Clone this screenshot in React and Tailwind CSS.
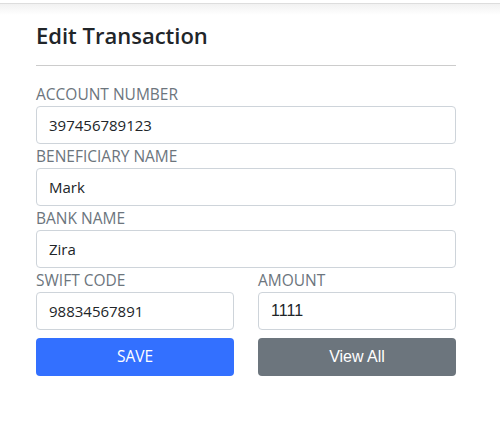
import React from 'react';

// Edit transaction form
const fields = [
    { label: 'ACCOUNT NUMBER', value: '397456789123' },
    { label: 'BENEFICIARY NAME', value: 'Mark' },
    { label: 'BANK NAME', value: 'Zira' },
];

const Field = ({ label, value, arial }) => (
    <div className="flex flex-col">
        <label className="text-[15.5px] leading-[24px] text-[#6c757d]">{label}</label>
        <input
            readOnly
            value={value}
            className={`h-[38px] w-full rounded-[4px] border border-[#ced4da] bg-white px-[12px] text-[#212529] outline-none ${arial ? "font-['Liberation_Sans',sans-serif] text-[16px]" : 'text-[15px]'}`}
        />
    </div>
);

export default function App() {
    return (
        <div className="min-h-[435px] w-full bg-white font-['Open_Sans',sans-serif]">
            {/* top shadow band */}
            <div className="mt-[3px] h-[12px] border-t border-[#dddddd] bg-gradient-to-b from-[#f1f1f1] to-white" />

            <div className="w-[420px] ml-[36px]">
                <h2 className="mt-[6px] text-[22px] leading-[28px] font-semibold text-[#212529]">Edit Transaction</h2>
                <hr className="mt-[16px] border-t border-[#cccccc]" />

                <div className="mt-[16px] flex flex-col">
                    {fields.map((f) => (
                        <Field key={f.label} label={f.label} value={f.value} />
                    ))}
                    <div className="grid grid-cols-2 gap-x-[24px]">
                        <Field label="SWIFT CODE" value="98834567891" />
                        <Field label="AMOUNT" value="1111" arial />
                    </div>
                    <div className="mt-[8px] grid grid-cols-2 gap-x-[24px]">
                        <button className="h-[38px] rounded-[4px] bg-[#3370ff] text-[15.5px] text-white">SAVE</button>
                        <button className="h-[38px] rounded-[4px] bg-[#6c757d] text-[16px] text-white font-['Liberation_Sans',sans-serif]">View All</button>
                    </div>
                </div>
            </div>
        </div>
    );
}
